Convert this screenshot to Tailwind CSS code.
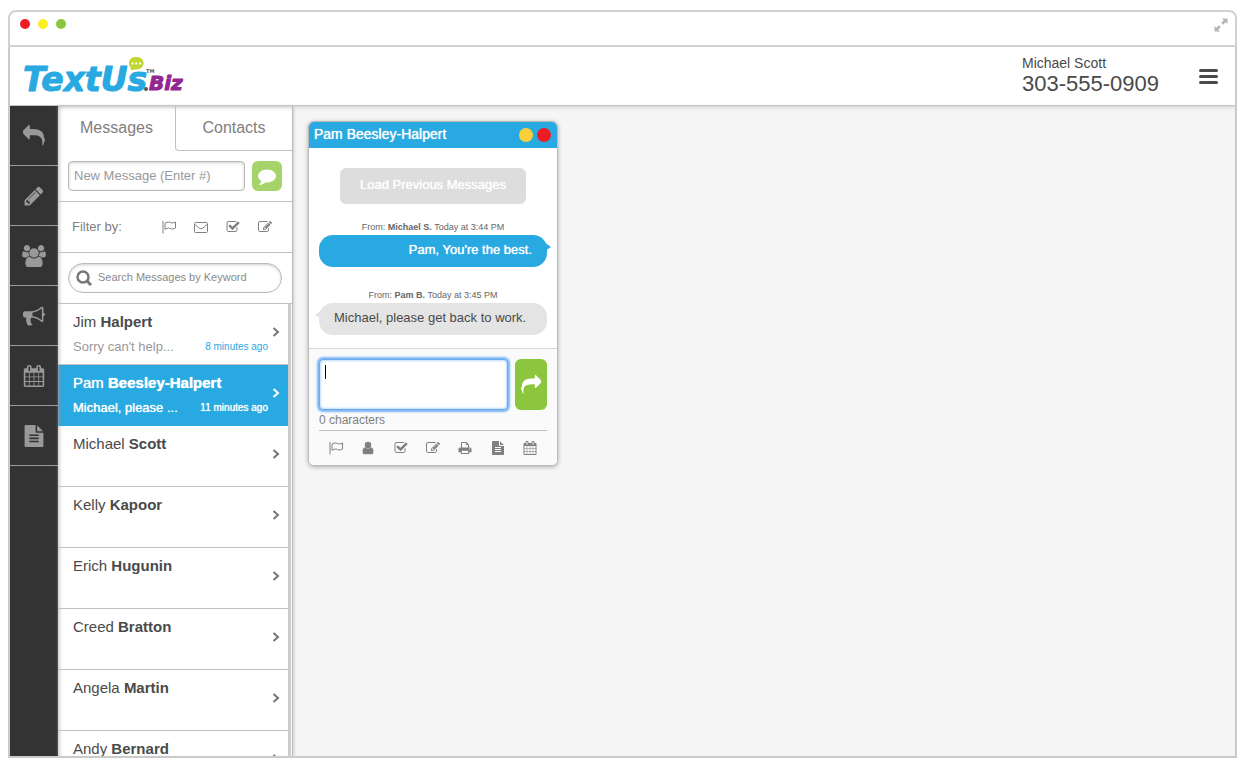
<!DOCTYPE html>
<html lang="en">
<head>
  <meta charset="UTF-8" />
  <meta name="viewport" content="width=device-width, initial-scale=1.0" />
  <title>TextUs.Biz</title>
  <script src="https://cdn.jsdelivr.net/npm/@tailwindcss/browser@4"></script>
</head>
<body class="bg-white h-screen flex flex-col px-2 pt-2.5 pb-[9px] font-['Liberation_Sans',Arial,sans-serif] text-[#4a4a4a] overflow-hidden">

  <!-- Icon sprite -->
  <svg class="hidden" aria-hidden="true">
    <symbol id="reply" viewBox="0 0 1792 1792"><path d="M1792 1120q0 166-127 451-3 7-10.500 24t-13.500 30-13 22q-12 17-28 17-15 0-23.500-10t-8.500-25q0-9 2.500-26.500t2.500-23.500q5-68 5-123 0-112-19.500-200.500t-54-153.500-89-112-117-78-149-48.500-172-23.500-199.500-7h-224v256q0 26-19 45t-45 19-45-19l-512-512q-19-19-19-45t19-45l512-512q19-19 45-19t45 19 19 45v256h224q713 0 875 403 53 134 53 333z"/></symbol>
    <symbol id="pencil" viewBox="0 0 1792 1792"><path d="M491 1536l91-91-235-235-91 91v107h128v128h107zm523-928q0-22-22-22-10 0-17 7l-542 542q-7 7-7 17 0 22 22 22 10 0 17-7l542-542q7-7 7-17zm-54-192l416 416-832 832h-416v-416zm683 96q0 53-37 90l-166 166-416-416 166-165q36-38 90-38 53 0 91 38l235 234q37 39 37 91z"/></symbol>
    <symbol id="users" viewBox="0 0 1920 1792"><path d="M593 896q-162 5-265 128h-134q-82 0-138-40.500t-56-118.500q0-353 124-353 6 0 43.500 21t97.500 42.500 119 21.500q67 0 133-23-5 37-5 66 0 159 93 256zm1071 637q0 120-73 189.500t-194 69.500h-874q-121 0-194-69.500t-73-189.500q0-53 3.500-103.500t14-109 26.500-108.500 43-97.500 62-81 85.500-53.500 111.500-20q10 0 43 21.500t73 48 107 48 135 21.500 135-21.500 107-48 73-48 43-21.500q61 0 111.500 20t85.500 53.500 62 81 43 97.500 26.500 108.500 14 109 3.500 103.500zm-1024-1277q0 106-75 181t-181 75-181-75-75-181 75-181 181-75 181 75 75 181zm704 384q0 159-112.500 271.500t-271.500 112.500-271.500-112.500-112.500-271.500 112.500-271.500 271.500-112.500 271.500 112.500 112.500 271.500zm576 225q0 78-56 118.500t-138 40.500h-134q-103-123-265-128 93-97 93-256 0-29-5-66 66 23 133 23 59 0 119-21.500t97.500-42.500 43.500-21q124 0 124 353zm-128-609q0 106-75 181t-181 75-181-75-75-181 75-181 181-75 181 75 75 181z"/></symbol>
    <symbol id="bullhorn" viewBox="0 0 1792 1792"><path d="M1664 640q53 0 90.500 37.500t37.500 90.500-37.500 90.500-90.500 37.500v384q0 52-38 90t-90 38q-417-347-812-380-58 19-91 66t-31 100.500 40 92.500q-20 33-23 65.500t6 58 33.500 55 48 50 61.500 50.500q-29 58-111.500 83t-168.500 11.500-132-55.500q-7-23-29.500-87.500t-32-94.500-23-89-15-101 3.500-98.500 22-110.500h-122q-66 0-113-47t-47-113v-192q0-66 47-113t113-47h480q435 0 896-384 52 0 90 38t38 90v384zm-128 604v-954q-394 302-768 343v270q377 42 768 341z"/></symbol>
    <symbol id="calendar" viewBox="0 0 1792 1792"><path d="M192 1664h288v-288h-288v288zm352 0h320v-288h-320v288zm-352-352h288v-320h-288v320zm352 0h320v-320h-320v320zm-352-384h288v-288h-288v288zm736 736h320v-288h-320v288zm-384-736h320v-288h-320v288zm768 736h288v-288h-288v288zm-384-352h320v-320h-320v320zm-352-864v-288q0-13-9.500-22.500t-22.500-9.500h-64q-13 0-22.500 9.500t-9.500 22.500v288q0 13 9.500 22.500t22.500 9.500h64q13 0 22.500-9.500t9.500-22.500zm736 864h288v-320h-288v320zm-384-384h320v-288h-320v288zm384 0h288v-288h-288v288zm32-480v-288q0-13-9.500-22.500t-22.500-9.500h-64q-13 0-22.500 9.500t-9.500 22.500v288q0 13 9.500 22.500t22.500 9.500h64q13 0 22.500-9.500t9.500-22.500zm384-64v1280q0 52-38 90t-90 38h-1408q-52 0-90-38t-38-90v-1280q0-52 38-90t90-38h128v-96q0-66 47-113t113-47h64q66 0 113 47t47 113v96h384v-96q0-66 47-113t113-47h64q66 0 113 47t47 113v96h128q52 0 90 38t38 90z"/></symbol>
    <symbol id="file" viewBox="0 0 1792 1792"><path d="M1596 476q14 14 28 36h-472v-472q22 14 36 28zm-476 164h544v1056q0 40-28 68t-68 28h-1344q-40 0-68-28t-28-68v-1600q0-40 28-68t68-28h800v544q0 40 28 68t68 28zm160 736v-64q0-14-9-23t-23-9h-704q-14 0-23 9t-9 23v64q0 14 9 23t23 9h704q14 0 23-9t9-23zm0-256v-64q0-14-9-23t-23-9h-704q-14 0-23 9t-9 23v64q0 14 9 23t23 9h704q14 0 23-9t9-23zm0-256v-64q0-14-9-23t-23-9h-704q-14 0-23 9t-9 23v64q0 14 9 23t23 9h704q14 0 23-9t9-23z"/></symbol>
    <symbol id="comment" viewBox="0 0 1792 1792"><path d="M1792 896q0 174-120 321.500t-326 233-450 85.500q-70 0-145-8-198 175-460 242-49 14-114 22-17 2-30.500-9t-17.500-29v-1q-3-4-.5-12t2-10 4.500-9.500l6-9 7-8.500 8-9q7-8 31-34.500t34.500-38 31-39.500 32.500-51 27-59 26-76q-157-89-247.500-220t-90.500-281q0-130 71-248.500t191-204.500 286-136.500 348-50.500 348 50.500 286 136.500 191 204.500 71 248.500z"/></symbol>
    <symbol id="check" viewBox="0 0 1792 1792"><path d="M1472 930v318q0 119-84.500 203.500t-203.500 84.500h-832q-119 0-203.500-84.500t-84.500-203.500v-832q0-119 84.500-203.500t203.500-84.500h832q63 0 117 25 15 7 18 23 3 17-9 29l-49 49q-10 10-23 10-3 0-9-2-23-6-45-6h-832q-66 0-113 47t-47 113v832q0 66 47 113t113 47h832q66 0 113-47t47-113v-254q0-13 9-22l64-64q10-10 23-10 6 0 12 3 20 8 20 29zm231-489l-814 814q-24 24-57 24t-57-24l-430-430q-24-24-24-57t24-57l110-110q24-24 57-24t57 24l263 263 647-647q24-24 57-24t57 24l110 110q24 24 24 57t-24 57z"/></symbol>
    <symbol id="edit" viewBox="0 0 1792 1792"><path d="M888 1184l116-116-152-152-116 116v56h96v96h56zm440-720q-16-16-33 1l-350 350q-17 17-1 33t33-1l350-350q17-17 1-33zm80 594v190q0 119-84.500 203.500t-203.500 84.500h-832q-119 0-203.500-84.500t-84.500-203.500v-832q0-119 84.500-203.500t203.500-84.500h832q63 0 117 25 15 7 18 23 3 17-9 29l-49 49q-14 14-32 8-23-6-45-6h-832q-66 0-113 47t-47 113v832q0 66 47 113t113 47h832q66 0 113-47t47-113v-126q0-13 9-22l64-64q15-15 35-7t20 29zm-96-738l288 288-672 672h-288v-288zm444 132l-92 92-288-288 92-92q28-28 68-28t68 28l152 152q28 28 28 68t-28 68z"/></symbol>
    <symbol id="flag" viewBox="0 0 14 14"><path d="M1 1v12.500M3 3.200c3-1.800 4.500-1.200 5.800-.6 1.400.6 2.500.5 4.700-.6v6c-2.200 1.200-3.300 1.200-4.700.6C7.500 8 6 7.600 3 9.300z" fill="none" stroke="currentColor"/></symbol>
    <symbol id="mail" viewBox="0 0 14 14"><path d="M.5 3.500q0-1 1-1h11q1 0 1 1v8q0 1-1 1h-11q-1 0-1-1zM.7 4.200c1.500 1.600 3 2.600 4.500 3.900q1.800 1.500 3.600 0c1.500-1.300 3-2.300 4.500-3.900" fill="none" stroke="currentColor"/></symbol>
    <symbol id="user" viewBox="0 0 14 14"><circle cx="7" cy="4" r="3.200"/><path d="M4 6.300Q1.500 6.800 1.500 11q0 2.200 2 2.200h7q2 0 2-2.200 0-4.200-2.500-4.700-3 2.600-6 0z"/></symbol>
    <symbol id="print" viewBox="0 0 14 14"><path d="M3.500 7V1.500h5l2 2V7M8.300 1.500v2.200h2.200" fill="none" stroke="currentColor"/><path fill-rule="evenodd" d="M2 6.500h10q1.500 0 1.500 1.500v3.200h-2.300V13H2.800v-1.800H.5V8Q.5 6.500 2 6.500zM3.800 9.800V12h6.400V9.800zM11.200 7.500v1h1v-1z"/></symbol>
    <symbol id="search" viewBox="0 0 16 16"><path d="M10.800 10.800L15 15" stroke="currentColor" stroke-width="3"/><circle cx="7" cy="7" r="5.500" fill="none" stroke="currentColor" stroke-width="2.500"/></symbol>
    <symbol id="chevron" viewBox="0 0 8 10"><path d="M1.500 1L6 5 1.500 9" fill="none" stroke="currentColor" stroke-width="2"/></symbol>
    <symbol id="expand" viewBox="0 0 14 14"><path d="M8 .5h5.500V6l-1.800-1.800-2.500 2.500-1.900-1.900 2.500-2.500zM6 13.500H.5V8l1.800 1.800 2.500-2.500 1.900 1.900-2.500 2.500z"/></symbol>
  </svg>

  <!-- Browser bar -->
  <div class="h-[37px] shrink-0 border-2 border-[#d0d2d2] rounded-t-lg flex items-start justify-between pl-2.5 pr-[7px] pt-1.5">
    <div class="flex gap-2 pt-px">
      <span class="size-2.5 rounded-full bg-[#ed1c24]"></span>
      <span class="size-2.5 rounded-full bg-[#fcee21]"></span>
      <span class="size-2.5 rounded-full bg-[#8cc63f]"></span>
    </div>
    <button aria-label="Full screen" class="text-[#b5b5b5]"><svg class="size-3.5 fill-current"><use href="#expand"/></svg></button>
  </div>

  <div class="flex-1 min-h-0 flex flex-col border-2 border-t-0 border-[#cacaca]">

    <!-- Header -->
    <header class="h-[59px] shrink-0 flex items-center justify-between border-b border-[#c4c4c4] pl-3 pr-[17px]">
      <a href="#" aria-label="TextUs.Biz">
        <svg class="w-44 h-12 font-['DejaVu_Sans'] font-bold italic" viewBox="0 0 176 48" stroke-linejoin="round">
          <text x="1" y="39" font-size="33" fill="#29a9e1" stroke="#29a9e1" stroke-width="1">TextUs</text>
          <circle cx="124" cy="37" r="2" fill="#555"/>
          <text x="127" y="38" font-size="20" fill="#92278f" stroke="#92278f" stroke-width="1">Biz</text>
          <text x="124" y="21" font-size="5" fill="#555" class="not-italic">TM</text>
          <path d="M114 5c5 0 7.500 2.500 7.500 6s-2.500 6.500-7.500 6.500c-1.500 0-4 .8-5 .3-.8-.4.3-1.500-.3-2.300C107.500 14.500 107 13 107 11.500 107 7.500 109.500 5 114 5z" fill="#bfd730"/>
          <path d="M109.500 10.500h2v2h-2zM113.200 10.500h2v2h-2zM117 10.500h2v2h-2z" fill="#fff"/>
        </svg>
      </a>
      <div class="flex items-center gap-10">
        <div class="pb-px">
          <p class="text-sm leading-4">Michael Scott</p>
          <p class="text-[22px] leading-[26px]">303-555-0909</p>
        </div>
        <button aria-label="Menu" class="flex flex-col gap-[3px]">
          <span class="w-[19px] h-[3px] rounded-sm bg-[#4a4a4a]"></span>
          <span class="w-[19px] h-[3px] rounded-sm bg-[#4a4a4a]"></span>
          <span class="w-[19px] h-[3px] rounded-sm bg-[#4a4a4a]"></span>
        </button>
      </div>
    </header>

    <div class="flex-1 min-h-0 flex bg-[#f5f5f5]">

      <!-- Icon rail -->
      <nav class="w-12 shrink-0 bg-[#333] text-[#999] flex flex-col">
        <button aria-label="Back" class="h-15 border-b border-[#999] flex items-center justify-center"><svg class="size-[22px] fill-current"><use href="#reply"/></svg></button>
        <button aria-label="Compose" class="h-15 border-b border-[#999] flex items-center justify-center"><svg class="size-[22px] fill-current"><use href="#pencil"/></svg></button>
        <button aria-label="Groups" class="h-15 border-b border-[#999] flex items-center justify-center"><svg class="w-6 h-[22px] fill-current"><use href="#users"/></svg></button>
        <button aria-label="Broadcast" class="h-15 border-b border-[#999] flex items-center justify-center"><svg class="size-[22px] fill-current"><use href="#bullhorn"/></svg></button>
        <button aria-label="Calendar" class="h-15 border-b border-[#999] flex items-center justify-center"><svg class="size-[22px] fill-current"><use href="#calendar"/></svg></button>
        <button aria-label="Templates" class="h-15 border-b border-[#999] flex items-center justify-center"><svg class="size-[22px] fill-current"><use href="#file"/></svg></button>
      </nav>

      <!-- Messages panel -->
      <aside class="w-[235px] shrink-0 flex flex-col bg-white border-r border-[#bbb] shadow-[inset_0_4px_4px_-3px_#bbb,inset_4px_0_4px_-3px_#bbb,1px_0_3px_#ccc]">
        <div class="grid grid-cols-2 h-[45px] shrink-0 text-base text-[#808080]">
          <button class="pb-0.5">Messages</button>
          <button class="border-l border-b border-[#c0c0c0] rounded-bl-sm">Contacts</button>
        </div>

        <form id="newMessage" class="h-[51px] shrink-0 border-b border-[#c0c0c0] flex items-center gap-[7px] px-2.5">
          <input type="text" aria-label="New Message" placeholder="New Message (Enter #)" class="flex-1 min-w-0 h-[30px] border border-[#bbb] rounded px-[5px] pb-0.5 text-[13px] placeholder:text-[#999] shadow-[inset_0_1px_3px_#ccc]" />
          <button type="submit" aria-label="Start message" class="size-[30px] rounded-md bg-[#a5d46a] text-white flex items-center justify-center"><svg class="size-[18px] fill-current"><use href="#comment"/></svg></button>
        </form>

        <div class="h-[51px] shrink-0 border-b border-[#c0c0c0] flex items-center justify-between pl-3.5 pr-5 text-[13px] text-[#808080]">
          <span>Filter by:</span>
          <div class="flex gap-[18px]">
            <button aria-label="Flagged"><svg class="size-3.5 fill-current"><use href="#flag"/></svg></button>
            <button aria-label="Unread"><svg class="size-3.5 fill-current"><use href="#mail"/></svg></button>
            <button aria-label="Done"><svg class="size-3.5 fill-current"><use href="#check"/></svg></button>
            <button aria-label="Drafts"><svg class="size-3.5 fill-current"><use href="#edit"/></svg></button>
          </div>
        </div>

        <div class="h-[51px] shrink-0 border-b border-[#c0c0c0] flex items-center px-2.5">
          <label class="flex-1 h-[30px] flex items-center gap-1.5 border border-[#bbb] rounded-full px-[7px] shadow-[inset_0_1px_3px_#ccc]">
            <svg class="size-4 text-[#777]"><use href="#search"/></svg>
            <input type="search" aria-label="Search messages" placeholder="Search Messages by Keyword" class="flex-1 min-w-0 pb-0.5 text-[11px] placeholder:text-[#8a8a8a] outline-none" />
          </label>
        </div>

        <div class="flex-1 min-h-0 flex pr-px">
          <ul id="contacts" class="flex-1 min-w-0 overflow-y-auto [scrollbar-width:none]"></ul>
          <div class="w-[3px] bg-[#ccc]"></div>
        </div>
      </aside>

      <!-- Conversations -->
      <main class="flex-1 min-w-0 p-[15px] shadow-[inset_0_4px_4px_-3px_#ccc]">
        <section class="w-[250px] rounded-md border border-[#bbb] bg-white shadow-[0_1px_4px_#aaa] overflow-hidden">
          <div class="h-[26px] bg-[#29a9e1] text-white flex items-center justify-between pl-[5px] pr-1.5">
            <h2 class="text-sm leading-6 pb-0.5 [text-shadow:0_0_1px_#fff]">Pam Beesley-Halpert</h2>
            <div class="flex gap-1">
              <button aria-label="Minimize" class="size-3.5 rounded-full bg-[#fccf3a]"></button>
              <button aria-label="Close" class="size-3.5 rounded-full bg-[#ed1c24]"></button>
            </div>
          </div>

          <div class="px-2.5 pt-5 pb-[13px] flex flex-col">
            <button class="self-center w-[186px] h-9 rounded-md bg-[#ddd] text-white text-[13px] pb-0.5 [text-shadow:0_0_1px_#fff]">Load Previous Messages</button>

            <p class="mt-[15px] h-4 text-[9px] leading-4 text-center text-[#666]">From: <b>Michael S.</b> Today at 3:44 PM</p>
            <div class="relative h-8 rounded-[14px] bg-[#29a9e1] text-white text-[13px] leading-[30px] text-right px-[15px] [text-shadow:0_0_1px_#fff]">
              Pam, You're the best.
              <svg class="absolute -right-1 top-[7px] w-3 h-2.5" viewBox="0 0 12 10"><path d="M5 0l7 5-6 4z" fill="#29a9e1"/></svg>
            </div>

            <p class="mt-5 h-4 text-[9px] leading-4 text-center text-[#666]">From: <b>Pam B.</b> Today at 3:45 PM</p>
            <div class="relative h-8 rounded-[14px] bg-[#e4e4e4] text-[13px] leading-[30px] px-[15px]">
              Michael, please get back to work.
              <svg class="absolute -left-1 top-[7px] w-3 h-2.5" viewBox="0 0 12 10"><path d="M7 0L0 5l6 4z" fill="#e4e4e4"/></svg>
            </div>
          </div>

          <div class="bg-[#fafafa] border-t border-[#d5d5d5] px-2.5 pt-2.5 text-[#808080]">
            <form id="replyForm" class="flex gap-[7px]">
              <div class="relative flex-1">
                <textarea id="message" aria-label="Message" class="block w-full h-[51px] resize-none bg-white border border-[#6aa9ee] rounded-sm px-1.5 py-1 text-[13px] text-[#333] outline-none shadow-[0_0_2px_2px_#7db8f5,inset_0_0_3px_#7db8f5]"></textarea>
                <span class="absolute left-1.5 top-1.5 w-px h-3.5 bg-black"></span>
              </div>
              <button type="submit" aria-label="Send" class="w-8 rounded-md bg-[#8cc63f] text-white flex items-center justify-center"><svg class="size-5 fill-current -scale-x-100"><use href="#reply"/></svg></button>
            </form>
            <p id="count" class="text-xs leading-5 border-b border-[#c0c0c0]">0 characters</p>
            <div class="flex justify-between h-[34px] items-center px-2.5">
              <button aria-label="Flag"><svg class="size-3.5 fill-current"><use href="#flag"/></svg></button>
              <button aria-label="Contact"><svg class="size-3.5 fill-current"><use href="#user"/></svg></button>
              <button aria-label="Mark done"><svg class="size-3.5 fill-current"><use href="#check"/></svg></button>
              <button aria-label="Note"><svg class="size-3.5 fill-current"><use href="#edit"/></svg></button>
              <button aria-label="Print"><svg class="size-3.5 fill-current"><use href="#print"/></svg></button>
              <button aria-label="Template"><svg class="size-3.5 fill-current"><use href="#file"/></svg></button>
              <button aria-label="Schedule"><svg class="size-3.5 fill-current"><use href="#calendar"/></svg></button>
            </div>
          </div>
        </section>
      </main>
    </div>
  </div>

  <script>
    const contacts = [
      { first: 'Jim', last: 'Halpert', text: "Sorry can't help...", time: '8 minutes ago' },
      { first: 'Pam', last: 'Beesley-Halpert', text: 'Michael, please ...', time: '11 minutes ago', active: true },
      { first: 'Michael', last: 'Scott' },
      { first: 'Kelly', last: 'Kapoor' },
      { first: 'Erich', last: 'Hugunin' },
      { first: 'Creed', last: 'Bratton' },
      { first: 'Angela', last: 'Martin' },
      { first: 'Andy', last: 'Bernard' }
    ];

    const list = document.getElementById('contacts');

    contacts.forEach(c => {
      const item = document.createElement('li');
      item.className = c.active
        ? 'h-[61px] border-b border-[#29a9e1] bg-[#29a9e1] text-white [text-shadow:0_0_1px_#fff] shadow-[inset_4px_0_4px_-3px_#999]'
        : 'h-[61px] border-b border-[#c0c0c0]';

      item.innerHTML = `
        <a href="#" class="h-full flex items-center justify-between pl-[15px] pr-2">
          <div class="w-[195px] h-full pt-2">
            <p class="text-[15px] leading-5">${c.first} <b>${c.last}</b></p>
            <p class="flex items-center justify-between pt-[5px] text-[13px] leading-5 ${c.active ? '' : 'text-[#999]'}">
              <span>${c.text || ''}</span>
              <span class="text-[10px] ${c.active ? '' : 'text-[#29a9e1]'}">${c.time || ''}</span>
            </p>
          </div>
          <svg class="w-2 h-2.5 mb-1 ${c.active ? '' : 'text-[#777]'}"><use href="#chevron"/></svg>
        </a>
      `;

      list.appendChild(item);
    });

    // Live character count
    const message = document.getElementById('message');
    message.addEventListener('input', () => {
      document.getElementById('count').textContent = `${message.value.length} characters`;
    });

    document.querySelectorAll('form').forEach(f => f.addEventListener('submit', e => e.preventDefault()));
  </script>

</body>
</html>
